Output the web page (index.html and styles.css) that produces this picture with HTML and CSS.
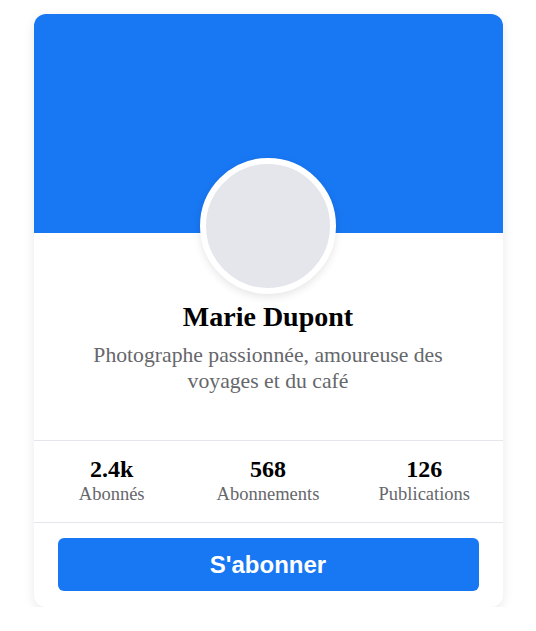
FILE: index.html
```html
<!DOCTYPE html>
<html lang="fr">
<head>
    <meta charset="UTF-8">
    <meta name="viewport" content="width=device-width, initial-scale=1.0">
    <title>Profil - Marie Dupont</title>
    <link rel="stylesheet" href="styles.css">
</head>
<body>
    <div class="card">
        <div class="cover"></div>
        <div class="avatar"></div>

        <div class="profile">
            <h1 class="name">Marie Dupont</h1>
            <p class="bio">Photographe passionnée, amoureuse des voyages et du café</p>
        </div>

        <div class="stats">
            <div class="stat">
                <span class="stat-value">2.4k</span>
                <span class="stat-label">Abonnés</span>
            </div>
            <div class="stat">
                <span class="stat-value">568</span>
                <span class="stat-label">Abonnements</span>
            </div>
            <div class="stat">
                <span class="stat-value">126</span>
                <span class="stat-label">Publications</span>
            </div>
        </div>

        <div class="actions">
            <button class="follow-button">S'abonner</button>
        </div>
    </div>
</body>
</html>
```

FILE: styles.css
```css
body {
    font-family: 'Liberation Serif', 'Times New Roman', serif;
    background-color: #ffffff;
    margin: 0;
    padding-top: 14px;
}

.card {
    width: 469px;
    margin: 0 auto;
    background-color: #ffffff;
    border-radius: 12px;
    overflow: hidden;
    box-shadow: 0 3px 12px rgba(0, 0, 0, 0.09);
}

.cover {
    height: 219px;
    background-color: #1877f2;
}

.avatar {
    position: relative;
    width: 124px;
    height: 124px;
    margin: -75px auto 0;
    border: 6px solid #ffffff;
    border-radius: 50%;
    background-color: #e4e6eb;
    box-shadow: 0 3px 8px rgba(0, 0, 0, 0.1);
}

.profile {
    padding: 0 24px 46px;
    text-align: center;
}

.name {
    margin: 7px 0 9px;
    font-size: 28px;
    font-weight: bold;
    line-height: normal;
    color: #000000;
}

.bio {
    margin: 0;
    font-size: 21.7px;
    line-height: 26px;
    color: #65676b;
}

/* Stats row */
.stats {
    display: grid;
    grid-template-columns: repeat(3, 1fr);
    padding: 15px 0 17px;
    border-top: 1px solid #e4e6eb;
    border-bottom: 1px solid #e4e6eb;
}

.stat {
    display: flex;
    flex-direction: column;
    align-items: center;
}

.stat-value {
    font-size: 24px;
    font-weight: bold;
    color: #000000;
}

.stat-label {
    margin-top: 1px;
    font-size: 18.5px;
    color: #65676b;
}

.actions {
    padding: 15px 24px 16px;
}

.follow-button {
    display: block;
    width: 100%;
    height: 53px;
    padding: 0;
    border: none;
    border-radius: 6px;
    background-color: #1877f2;
    color: #ffffff;
    font-family: 'Liberation Sans', Arial, sans-serif;
    font-size: 24px;
    font-weight: bold;
    line-height: 53px;
    cursor: pointer;
}

.follow-button:hover {
    background-color: #166fe5;
}
```
